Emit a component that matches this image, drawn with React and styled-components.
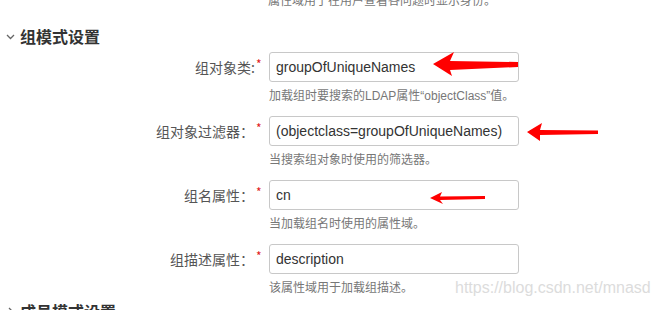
import React from "react";
import styled, { createGlobalStyle } from "styled-components";

const Global = createGlobalStyle`
  html, body { margin: 0; padding: 0; background: #fff; }
  body { font-family: "Liberation Sans", "Noto Sans CJK SC", sans-serif; overflow: hidden; }
`;

const Page = styled.div`
  position: relative;
  width: 656px;
  height: 310px;
  overflow: hidden;
  padding-left: 6px;
  box-sizing: border-box;
`;

const TopHint = styled.div`
  margin: -7px 0 0 262px;
  font-size: 12px;
  line-height: 14px;
  color: #777;
  font-family: "Noto Sans CJK SC", sans-serif;
`;

const SectionTitle = styled.div`
  display: flex;
  align-items: center;
  gap: 5px;
  margin-top: ${(p) => p.$mt}px;
  height: 24px;
  font-size: 16px;
  font-weight: 600;
  color: #333;
  font-family: "Noto Sans CJK SC", sans-serif;
`;

const Form = styled.div`
  margin-top: 4px;
  display: flex;
  flex-direction: column;
  gap: 10px;
`;

const Row = styled.div`
  display: grid;
  grid-template-columns: 254px 250px;
  column-gap: 9px;
  row-gap: 4px;
  align-items: center;
`;

const Label = styled.label`
  display: flex;
  justify-content: flex-end;
  align-items: center;
  font-size: 14px;
  color: #555;
  font-family: "Noto Sans CJK SC", sans-serif;
  height: 30px;
`;

const Star = styled.span`
  color: #e02020;
  font-size: 12px;
  align-self: flex-start;
  margin-top: 6px;
  margin-left: ${(p) => p.$ml}px;
  width: 4px;
  line-height: 12px;
`;

const Input = styled.input`
  box-sizing: border-box;
  width: 250px;
  height: 30px;
  border: 1px solid #c8c8c8;
  border-radius: 3px;
  padding: 0 6px;
  font-size: 14px;
  color: #333;
  font-family: "Liberation Sans", Arial, sans-serif;
  background: #fff;
  outline: none;
`;

const Help = styled.div`
  grid-column: 2;
  font-size: 12px;
  line-height: 20px;
  color: #777;
  font-family: "Liberation Sans", "Noto Sans CJK SC", sans-serif;
`;

const Overlay = styled.svg`
  position: absolute;
  left: 0;
  top: 0;
  pointer-events: none;
`;

const Watermark = styled.div`
  position: absolute;
  left: 455px;
  top: 279px;
  font-size: 16px;
  color: #dcdcdc;
  font-family: "Liberation Sans", Arial, sans-serif;
`;

const Chevron = ({ open }) => (
  <svg width="9" height="9" viewBox="0 0 9 9" style={{ transform: open ? "none" : "rotate(-90deg)" }}>
    <polyline points="1,3 4.5,6.5 8,3" fill="none" stroke="#666" strokeWidth="1.3" />
  </svg>
);

const fields = [
  { label: "组对象类:", ml: 1, value: "groupOfUniqueNames", help: "加载组时要搜索的LDAP属性“objectClass”值。" },
  { label: "组对象过滤器：", ml: 2, value: "(objectclass=groupOfUniqueNames)", help: "当搜索组对象时使用的筛选器。" },
  { label: "组名属性：", ml: 2, value: "cn", help: "当加载组名时使用的属性域。" },
  { label: "组描述属性：", ml: 2, value: "description", help: "该属性域用于加载组描述。" },
];

export default function App() {
  return (
    <Page>
      <Global />
      <TopHint>属性域用于在用户查看各问题时显示身份。</TopHint>
      <SectionTitle $mt={17}>
        <Chevron open />
        组模式设置
      </SectionTitle>
      <Form>
        {fields.map((f) => (
          <Row key={f.label}>
            <Label>
              {f.label}
              <Star $ml={f.ml}>*</Star>
            </Label>
            <Input readOnly defaultValue={f.value} />
            <Help>{f.help}</Help>
          </Row>
        ))}
      </Form>
      <SectionTitle $mt={1}>
        <Chevron />
        成员模式设置
      </SectionTitle>
      <Watermark>https://blog.csdn.net/mnasd</Watermark>
      <Overlay width="656" height="310" viewBox="0 0 656 310">
        <polygon fill="#ff0000" points="433,64 454,52 450,61 518,62 518,67 450,70 452,76" />
        <polygon fill="#ff0000" points="527,132 542,123 540,130 598,130.5 598,134 540,135 540,141" />
        <polygon fill="#ff0000" points="430,198 442,192 440,196.5 485,196 485,199 440,200 443,204" />
      </Overlay>
    </Page>
  );
}
